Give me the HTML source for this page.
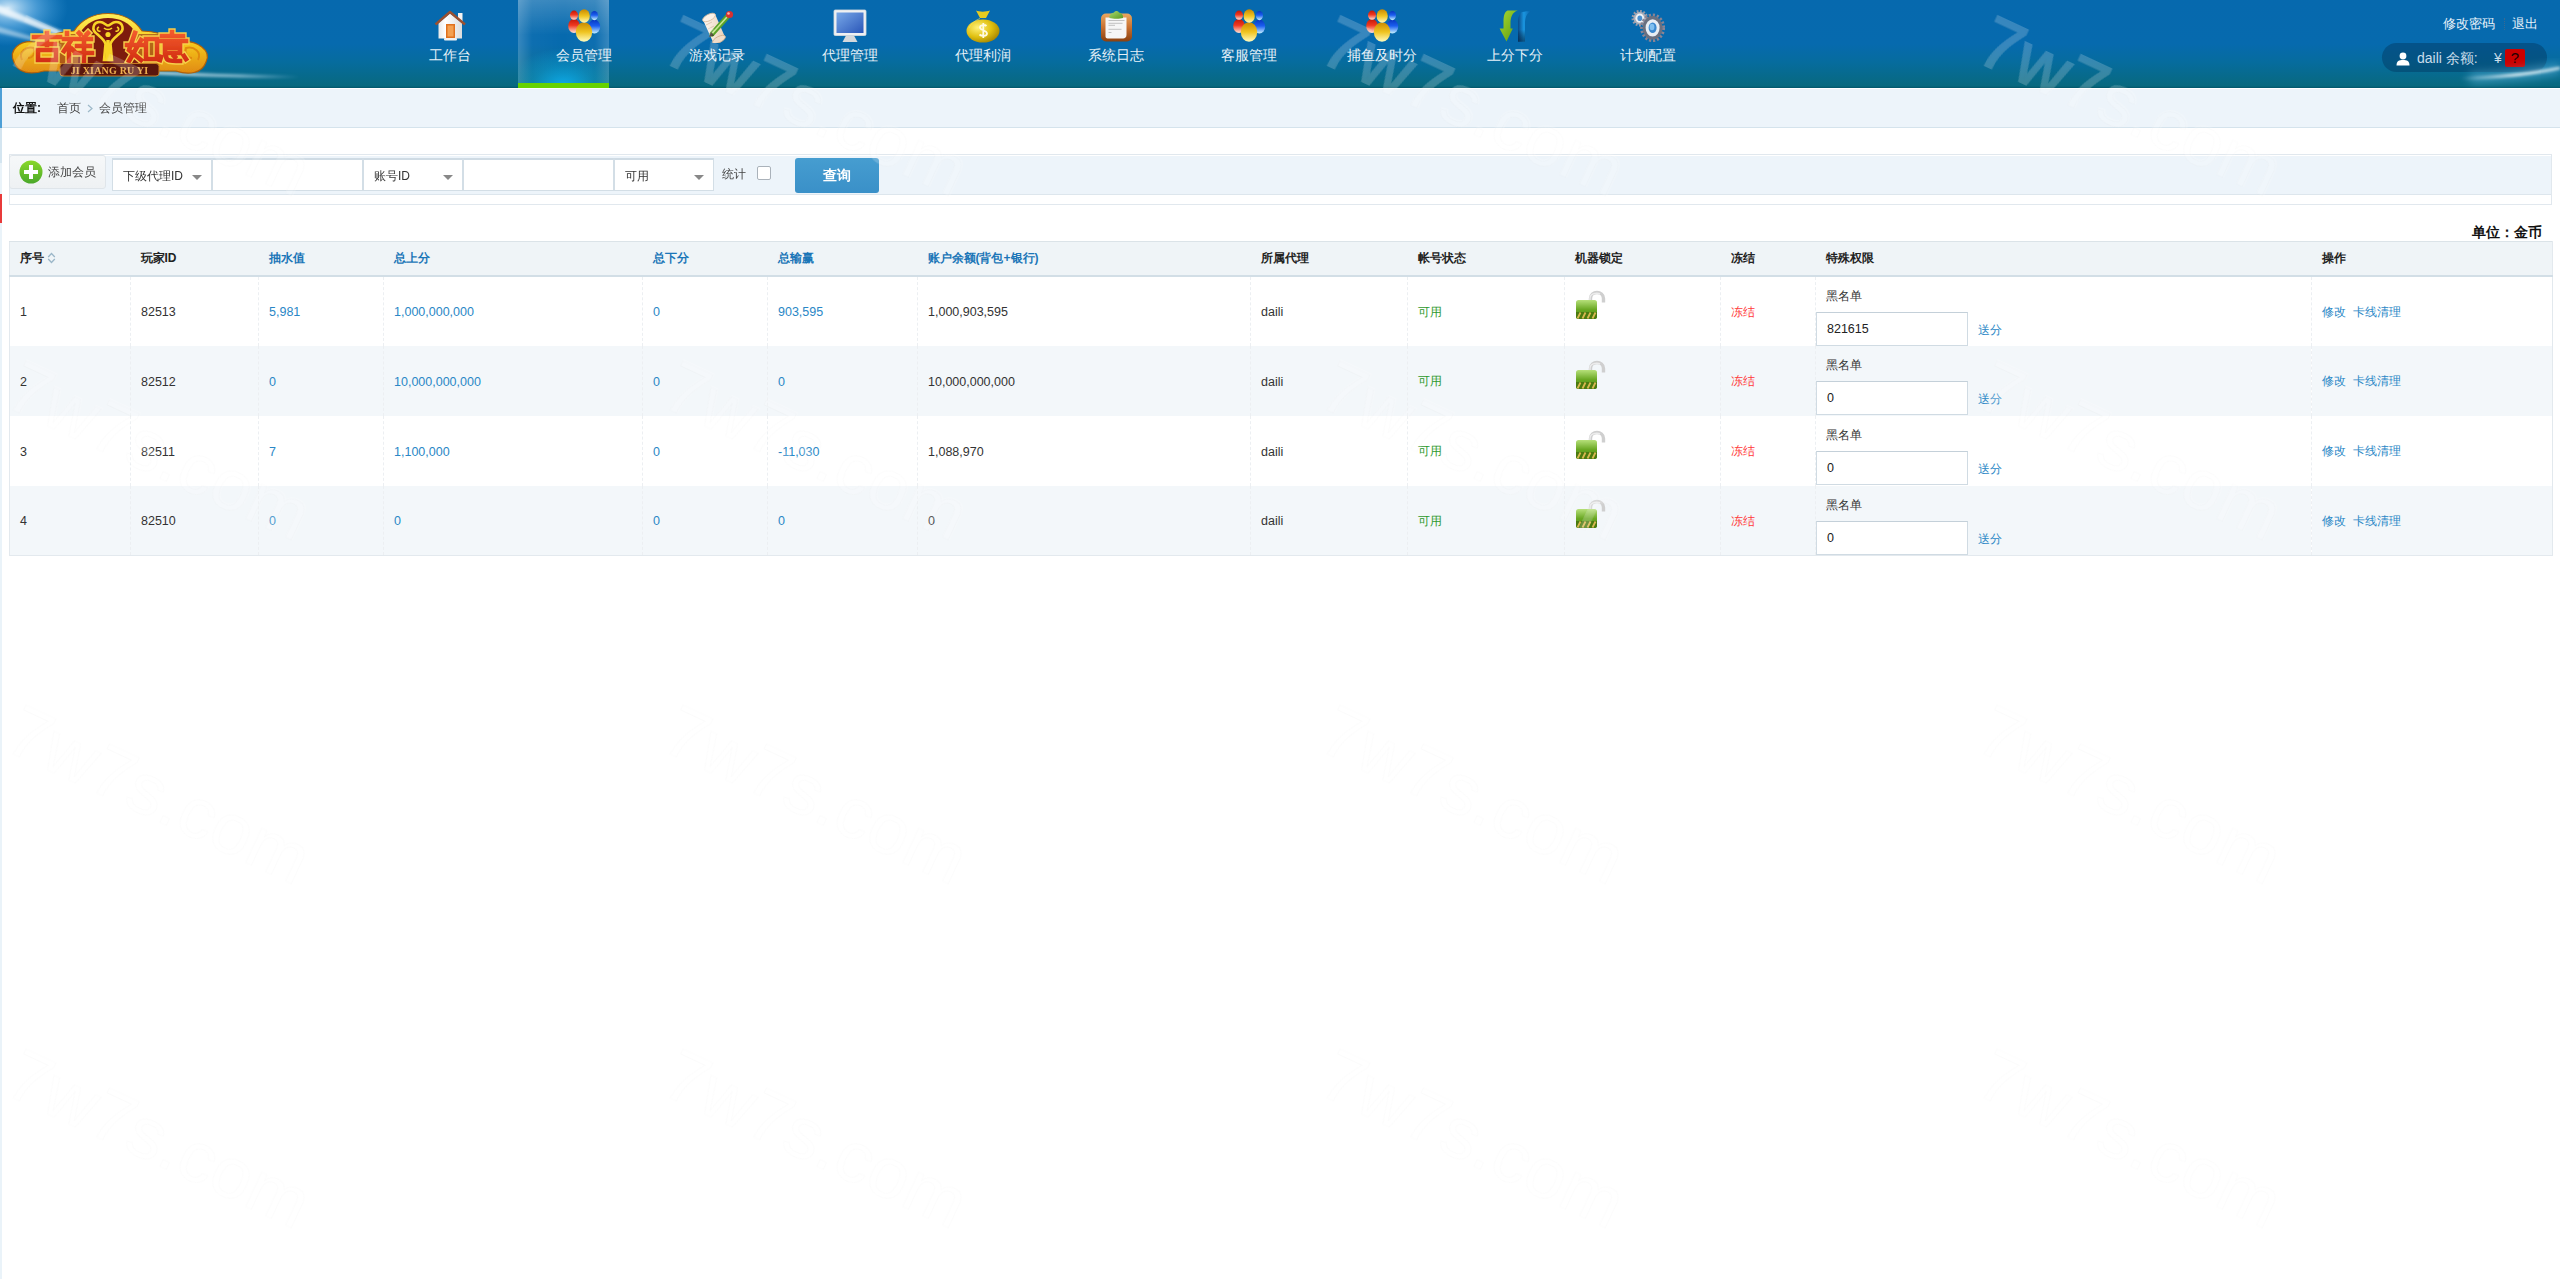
<!DOCTYPE html>
<html><head><meta charset="utf-8"><title>会员管理</title>
<style>
*{margin:0;padding:0;box-sizing:border-box}
html,body{width:2560px;height:1279px;overflow:hidden;background:#fff;font-family:"Liberation Sans",sans-serif;font-size:12px;color:#333}
.a{position:absolute}
#hd{left:0;top:0;width:2560px;height:88px;background:linear-gradient(to bottom,#0669ae 0px,#066aae 44px,#066c9e 62px,#08697f 86px,#03556a 88px);overflow:hidden}
.nav{top:0;width:133px;height:88px;text-align:center;color:#e6f1f8;font-size:14px}
.nav .t{position:absolute;left:0;right:0;top:47px;line-height:16px;white-space:nowrap}
.nav svg{position:absolute;left:50%;top:9px;margin-left:-17px}
#bc{left:0;top:88px;width:2560px;height:40px;border-top:1px solid #fff;background:#edf4fa;border-bottom:1px solid #d5e3ec}
#ls{left:0;top:88px;width:2px;height:1191px;background:#eaf3f9}
#tb{left:9px;top:154px;width:2543px;height:51px;border:1px solid #e1e8ee;background:#fff}
#tbi{left:0;top:0;width:2541px;height:40px;border-top:1px solid #fff;background:#edf4fa;border-bottom:1px solid #dde6ed}
.sel{top:2px;height:33px;background:#fff;border:1px solid #d3dee6;border-top:2px solid #cfdbe4}
.sel .t{position:absolute;left:10px;top:9px;line-height:14px;font-size:12px;color:#333}
.sel .ar{position:absolute;right:9px;top:15px;width:0;height:0;border-left:5px solid transparent;border-right:5px solid transparent;border-top:5px solid #888}
table{border-collapse:collapse;table-layout:fixed}
#tbl{position:absolute;left:9px;top:241px;width:2543px;border:1px solid #e3e9ee;border-top:1px solid #dbe3e8}
#tbl th{height:34px;background:#eff4f7;border-bottom:2px solid #d2dee6;text-align:left;padding-left:10px;font-weight:bold;font-size:12px;color:#222}
#tbl th.b{color:#1b76b8}
#tbl td{height:70px;padding-left:10px;padding-top:2px;font-size:12.5px;color:#333;border-left:1px dashed #eceff2;vertical-align:middle;white-space:nowrap}
#tbl td:first-child{border-left:none}
#tbl tr.e td{background:#f3f7fa}
#tbl td.bl,.bl{color:#2a87c6}
#tbl td.gr{color:#2e9a2e;font-size:12px}
#tbl td.rd{color:#ff3b3b;font-size:12px}
#tbl td.sp{position:relative;padding-left:0}
.bk{position:absolute;left:10px;top:12px;line-height:14px;color:#333;font-size:12px}
.inp{position:absolute;left:0;top:35px;width:152px;height:34px;border:1px solid #d0dbe3;border-top-color:#c4d0d9;background:#fff;padding-left:10px;line-height:32px;color:#222}
.sf{position:absolute;left:162px;top:46px;line-height:14px;color:#2a87c6;font-size:12px}
</style></head>
<body>
<div id="hd" class="a">
<svg class="a" style="left:0;top:0" width="320" height="88" viewBox="0 0 320 88">
<defs>
<linearGradient id="gold" x1="0" y1="0" x2="0" y2="1"><stop offset="0" stop-color="#fff05a"/><stop offset="0.5" stop-color="#f6c81e"/><stop offset="1" stop-color="#e08a10"/></linearGradient>
<linearGradient id="streak" x1="150" y1="0" x2="300" y2="0" gradientUnits="userSpaceOnUse"><stop offset="0" stop-color="#fff" stop-opacity="0.9"/><stop offset="0.6" stop-color="#e0f4ff" stop-opacity="0.7"/><stop offset="1" stop-color="#bfe6ff" stop-opacity="0"/></linearGradient>
<linearGradient id="redg" x1="0" y1="0" x2="0" y2="1"><stop offset="0" stop-color="#f25a2c"/><stop offset="1" stop-color="#d22e12"/></linearGradient>
<radialGradient id="glow" cx="0.5" cy="0.5" r="0.5"><stop offset="0" stop-color="#e8f6ff" stop-opacity="0.9"/><stop offset="0.5" stop-color="#8fd0ff" stop-opacity="0.45"/><stop offset="1" stop-color="#5bb6ef" stop-opacity="0"/></radialGradient>
<filter id="bl2" x="-20%" y="-50%" width="140%" height="200%"><feGaussianBlur stdDeviation="1.6"/></filter>
<filter id="bl1"><feGaussianBlur stdDeviation="0.5"/></filter>
</defs>
<ellipse cx="8" cy="8" rx="60" ry="38" fill="url(#glow)"/>
<g filter="url(#bl2)">
<path d="M-4 4 L64 32 L60 36 L-4 12Z" fill="#fff" opacity="0.75"/>
<path d="M-4 26 L44 40 L42 43 L-4 32Z" fill="#fff" opacity="0.45"/>
<path d="M150 71 C 190 73, 240 75, 300 76 L 300 78 C 240 78, 190 76, 150 74Z" fill="url(#streak)" opacity="0.9"/>
</g>
<g filter="url(#bl1)">
<path d="M14 62 C 8 50, 20 40, 34 42 C 46 36, 62 31, 74 31 C 82 19, 95 13.5, 108 13.5 C 121 13.5, 134 19, 142 31 C 154 31, 170 36, 182 42 C 196 40, 212 50, 206 62 C 202 74, 188 75, 176 71 L 44 71 C 30 75, 18 73, 14 62 Z" fill="url(#gold)" stroke="#b06008" stroke-width="1.2"/>
<path d="M22 60 C 18 52, 26 46, 34 48 C 36 54, 32 58, 28 58 M 198 60 C 202 52, 194 46, 186 48 C 184 54, 188 58, 192 58" fill="none" stroke="#e08a10" stroke-width="2"/>
<path d="M80 33 C 86 23, 96 18, 108 18 C 120 18, 130 23, 136 33 L 138 63 L 78 63 Z" fill="#7e1a10"/>
<path d="M56 34 H 80 V 63 H 56Z M 136 34 H 160 V 63 H 136Z" fill="#8a2a14" opacity="0.6"/>
<path d="M100 22 C 93 22, 91 30, 97 34 C 101 37.5, 104.5 39.5, 105.5 44 L 104 60 L 112 60 L 110.5 44 C 111.5 39.5, 115 37.5, 119 34 C 125 30, 123 22, 116 22 C 112 22, 110 25.5, 108 25.5 C 106 25.5, 104 22, 100 22Z" fill="#7a1810" stroke="#f8d428" stroke-width="2.6"/>
<path d="M99 27 C 96 28.5, 97.5 32, 100.5 31 M 117 27 C 120 28.5, 118.5 32, 115.5 31 M 104 28 C 106 30, 110 30, 112 28" fill="none" stroke="#f8d428" stroke-width="1.6"/>
<circle cx="108" cy="34.5" r="2.6" fill="#f8d428"/>
<path d="M106.3 40 L 105 59 L 111 59 L 109.7 40Z" fill="#f8d428"/>
<g fill="none" stroke-linecap="square" stroke-linejoin="miter">
<g stroke="#f6d04a" stroke-width="7.4">
<path id="ch" d="M34 37 H60 M47 33 V45 M39 44 H55 M38 50 H56 V60 H38Z M67 33 V34 M64 39 H72 L64 51 M69 45 V61 M72 49 L74 51 M79 33 L80 34 M88 33 L87 34 M76 39 H91 M77 46 H90 M75 53 H92 M84 37 V61 M135 33 L129 50 L141 60 M141 40 L129 61 M127 45 H142 M146 39 H157 V59 H146Z M172 32 V34 M162 36 H183 M159 41 H186 M165 44 H180 V53 H165Z M165 48 H180 M161 57 L160 60 M166 56 C 166 61, 170 61, 180 61 M174 56 L175 57 M184 56 L186 59"/>
</g>
<g stroke="url(#redg)" stroke-width="4.6"><use href="#ch"/></g>
</g>
<rect x="60" y="63.5" width="99" height="12.5" rx="3" fill="#5a180c" stroke="#c47a24" stroke-width="1"/>
<text x="109.5" y="73.5" text-anchor="middle" font-family="Liberation Serif" font-weight="bold" font-size="10" fill="#f0b050" letter-spacing="0.2">JI XIANG RU YI</text>
</g>
</svg>
<div class="a" style="left:518px;top:0;width:91px;height:88px;background:radial-gradient(ellipse 55px 38px at 50% 86px,rgba(14,175,240,0.95),rgba(14,175,240,0.35) 55%,rgba(14,175,240,0) 100%),linear-gradient(to right,rgba(255,255,255,0.2),rgba(255,255,255,0.03) 14px,rgba(255,255,255,0) 50%,rgba(255,255,255,0.03) 77px,rgba(255,255,255,0.2)),linear-gradient(to bottom,rgba(255,255,255,0.2),rgba(255,255,255,0) 35px)"></div><div class="a" style="left:518px;top:83px;width:91px;height:5px;background:#66d200"></div>
<div class="a nav" style="left:383.5px"><svg width="34" height="34" viewBox="0 0 34 34"><defs><linearGradient id="hw" x1="0" y1="0" x2="1" y2="0"><stop offset="0" stop-color="#e8e8e8"/><stop offset="0.3" stop-color="#fff"/><stop offset="1" stop-color="#dcdcdc"/></linearGradient></defs><path d="M25 4 H29.5 V14 L25 10Z" fill="#f2f2f2"/><path d="M5.5 14 L17 4.5 L29 14 V29.5 H5.5Z" fill="url(#hw)"/><path d="M2.5 15.5 L17 3 L32 15.5" fill="none" stroke="#9a5030" stroke-width="2.4" stroke-linejoin="round"/><rect x="13" y="15" width="9" height="14" fill="#e0701c"/><rect x="14.5" y="16.5" width="6" height="11" fill="#f4a050"/><rect x="11" y="29" width="13" height="2.5" rx="1" fill="#f0f0f0"/></svg><div class="t">工作台</div></div>
<div class="a nav" style="left:517.5px"><svg width="34" height="34" viewBox="0 0 34 34"><defs>
<linearGradient id="pr" x1="0" y1="0" x2="0" y2="1"><stop offset="0" stop-color="#c01808"/><stop offset="0.45" stop-color="#f03820"/><stop offset="1" stop-color="#ffe4d8"/></linearGradient><linearGradient id="pb" x1="0" y1="0" x2="0" y2="1"><stop offset="0" stop-color="#0838c0"/><stop offset="0.45" stop-color="#1a5ef0"/><stop offset="1" stop-color="#c8f4ff"/></linearGradient><linearGradient id="py" x1="0" y1="0" x2="0" y2="1"><stop offset="0" stop-color="#c88800"/><stop offset="0.5" stop-color="#f0c420"/><stop offset="1" stop-color="#fffcc0"/></linearGradient></defs>
<ellipse cx="7" cy="17" rx="5.8" ry="7" fill="url(#pr)"/><ellipse cx="7" cy="6.2" rx="4" ry="4.6" fill="url(#pr)"/><ellipse cx="27.4" cy="17.6" rx="5.8" ry="7" fill="url(#pb)"/><ellipse cx="27.4" cy="6.6" rx="3.6" ry="4.6" fill="url(#pb)"/><ellipse cx="17" cy="23" rx="8.2" ry="9.8" fill="url(#py)"/><ellipse cx="17.2" cy="7" rx="5.6" ry="6.8" fill="url(#py)"/>


</svg><div class="t">会员管理</div></div>
<div class="a nav" style="left:650px"><svg width="34" height="34" viewBox="0 0 34 34"><defs><linearGradient id="pap" x1="0" y1="0" x2="1" y2="0"><stop offset="0" stop-color="#fff8f0"/><stop offset="1" stop-color="#e8d0b8"/></linearGradient><linearGradient id="pen" x1="0" y1="0" x2="1" y2="1"><stop offset="0" stop-color="#d8f0a0"/><stop offset="1" stop-color="#4a9a20"/></linearGradient></defs><path d="M3 11 L15 5 L25 28 L13 33Z" fill="url(#pap)"/><ellipse cx="9" cy="8.5" rx="7" ry="3.2" transform="rotate(-27 9 8.5)" fill="#fbf2e8" stroke="#d8bca0" stroke-width="0.8"/><ellipse cx="19" cy="30.5" rx="7" ry="3" transform="rotate(-27 19 30.5)" fill="#f0dcc8" stroke="#d0b090" stroke-width="0.8"/><path d="M6 16 L12 13 M8 20 L14 17" stroke="#d8c0a8" stroke-width="0.8"/><path d="M12 25 L28 7" stroke="#5aa228" stroke-width="5" stroke-linecap="round"/><path d="M12.5 24 L27 8" stroke="#c8e890" stroke-width="1.6"/><path d="M11 23 L14 26.5 L9 28Z" fill="#3a3020"/><circle cx="29.5" cy="5.5" r="3.6" fill="#d83030"/><circle cx="28.5" cy="4.5" r="1.3" fill="#ffb0a0"/></svg><div class="t">游戏记录</div></div>
<div class="a nav" style="left:783.5px"><svg width="34" height="34" viewBox="0 0 34 34"><defs><linearGradient id="scr" x1="0" y1="0" x2="1" y2="1"><stop offset="0" stop-color="#78a8e8"/><stop offset="1" stop-color="#2a56b8"/></linearGradient></defs><rect x="1" y="1" width="32" height="25.5" rx="1.2" fill="#eef0f2"/><rect x="1" y="1" width="32" height="25.5" rx="1.2" fill="none" stroke="#d8dce0" stroke-width="0.8"/><rect x="3.5" y="3.5" width="27" height="20.5" fill="url(#scr)"/><path d="M13 26.5 H21 L24.5 33 H9.5Z" fill="#d4d8dc"/></svg><div class="t">代理管理</div></div>
<div class="a nav" style="left:916.5px"><svg width="34" height="34" viewBox="0 0 34 34"><defs><radialGradient id="bag" cx="0.35" cy="0.35" r="0.75"><stop offset="0" stop-color="#fff27a"/><stop offset="0.55" stop-color="#e0c010"/><stop offset="1" stop-color="#a08000"/></radialGradient></defs><path d="M10 1.5 C 13 3, 20 3, 24 1.5 L 20 9 H 14Z" fill="#e6cc20"/><ellipse cx="17" cy="22" rx="16.5" ry="11.5" fill="url(#bag)"/><path d="M14 9.5 C 10 11, 5 14, 3 19" fill="none" stroke="#f8e860" stroke-width="1" opacity="0.6"/><path d="M20.5 17 C 19 15.5, 14 15.5, 14 18.5 C 14 21.5, 21 21, 21 24.5 C 21 27.5, 15.5 27.5, 13.5 25.5 M17.3 14 V29" fill="none" stroke="#fffbe0" stroke-width="1.8"/></svg><div class="t">代理利润</div></div>
<div class="a nav" style="left:1049px"><svg width="34" height="34" viewBox="0 0 34 34"><defs><linearGradient id="brd" x1="0" y1="0" x2="0" y2="1"><stop offset="0" stop-color="#eaa860"/><stop offset="0.5" stop-color="#c87030"/><stop offset="1" stop-color="#8a4010"/></linearGradient><linearGradient id="clp" x1="0" y1="0" x2="1" y2="1"><stop offset="0" stop-color="#a8d870"/><stop offset="1" stop-color="#5a9a20"/></linearGradient></defs><rect x="2" y="4.5" width="31" height="28" rx="5" fill="url(#brd)"/><path d="M6.5 8.5 H27.5 V26 C27.5 28, 26 29.5, 24 29.5 H8.5 C7.5 29.5, 6.5 28.5, 6.5 27.5Z" fill="#f6f6f6"/><path d="M9.5 11.5 H25.5 M9.5 14.3 H23.5 M9.5 16.3 H16 M9.5 20.3 H22.5 M9.5 23.5 H12.5" stroke="#bbb" stroke-width="0.9"/><path d="M10.5 9 C 10 5, 13 4, 15 3.5 C 16 1.5, 19 1.5, 20 3.5 C 22 4, 24.5 5, 24 9 C 21 10, 14 10, 10.5 9Z" fill="url(#clp)"/></svg><div class="t">系统日志</div></div>
<div class="a nav" style="left:1182.5px"><svg width="34" height="34" viewBox="0 0 34 34"><defs>
<linearGradient id="pr" x1="0" y1="0" x2="0" y2="1"><stop offset="0" stop-color="#c01808"/><stop offset="0.45" stop-color="#f03820"/><stop offset="1" stop-color="#ffe4d8"/></linearGradient><linearGradient id="pb" x1="0" y1="0" x2="0" y2="1"><stop offset="0" stop-color="#0838c0"/><stop offset="0.45" stop-color="#1a5ef0"/><stop offset="1" stop-color="#c8f4ff"/></linearGradient><linearGradient id="py" x1="0" y1="0" x2="0" y2="1"><stop offset="0" stop-color="#c88800"/><stop offset="0.5" stop-color="#f0c420"/><stop offset="1" stop-color="#fffcc0"/></linearGradient></defs>
<ellipse cx="7" cy="17" rx="5.8" ry="7" fill="url(#pr)"/><ellipse cx="7" cy="6.2" rx="4" ry="4.6" fill="url(#pr)"/><ellipse cx="27.4" cy="17.6" rx="5.8" ry="7" fill="url(#pb)"/><ellipse cx="27.4" cy="6.6" rx="3.6" ry="4.6" fill="url(#pb)"/><ellipse cx="17" cy="23" rx="8.2" ry="9.8" fill="url(#py)"/><ellipse cx="17.2" cy="7" rx="5.6" ry="6.8" fill="url(#py)"/>


</svg><div class="t">客服管理</div></div>
<div class="a nav" style="left:1315.5px"><svg width="34" height="34" viewBox="0 0 34 34"><defs>
<linearGradient id="pr" x1="0" y1="0" x2="0" y2="1"><stop offset="0" stop-color="#c01808"/><stop offset="0.45" stop-color="#f03820"/><stop offset="1" stop-color="#ffe4d8"/></linearGradient><linearGradient id="pb" x1="0" y1="0" x2="0" y2="1"><stop offset="0" stop-color="#0838c0"/><stop offset="0.45" stop-color="#1a5ef0"/><stop offset="1" stop-color="#c8f4ff"/></linearGradient><linearGradient id="py" x1="0" y1="0" x2="0" y2="1"><stop offset="0" stop-color="#c88800"/><stop offset="0.5" stop-color="#f0c420"/><stop offset="1" stop-color="#fffcc0"/></linearGradient></defs>
<ellipse cx="7" cy="17" rx="5.8" ry="7" fill="url(#pr)"/><ellipse cx="7" cy="6.2" rx="4" ry="4.6" fill="url(#pr)"/><ellipse cx="27.4" cy="17.6" rx="5.8" ry="7" fill="url(#pb)"/><ellipse cx="27.4" cy="6.6" rx="3.6" ry="4.6" fill="url(#pb)"/><ellipse cx="17" cy="23" rx="8.2" ry="9.8" fill="url(#py)"/><ellipse cx="17.2" cy="7" rx="5.6" ry="6.8" fill="url(#py)"/>


</svg><div class="t">捕鱼及时分</div></div>
<div class="a nav" style="left:1448.5px"><svg width="34" height="34" viewBox="0 0 34 34"><defs><linearGradient id="ga" x1="0" y1="0" x2="1" y2="1"><stop offset="0" stop-color="#a8d830"/><stop offset="1" stop-color="#5a9a10"/></linearGradient><linearGradient id="ba" x1="0" y1="0" x2="1" y2="0"><stop offset="0" stop-color="#0a4a88"/><stop offset="0.45" stop-color="#1a96e0"/><stop offset="1" stop-color="#0a60a8"/></linearGradient><linearGradient id="bb" x1="0" y1="0" x2="0" y2="1"><stop offset="0.6" stop-color="#000" stop-opacity="0"/><stop offset="1" stop-color="#002040" stop-opacity="0.6"/></linearGradient></defs><path d="M9.5 1.5 H19.8 C 14 3, 12.5 9, 12.5 14 V19.5 H14.8 L8.5 32.5 L1.6 19.5 H5.5 V13 C 5.5 7, 6.5 3, 9.5 1.5Z" fill="url(#ga)"/><path d="M24 3 C 28 2.2, 31 2.3, 33 2.5 C 28.5 4, 27 9, 27 15 V32.7 H20 V15 C 20 9, 21 5, 24 3Z" fill="url(#ba)"/><path d="M24 3 C 28 2.2, 31 2.3, 33 2.5 C 28.5 4, 27 9, 27 15 V32.7 H20 V15 C 20 9, 21 5, 24 3Z" fill="url(#bb)"/></svg><div class="t">上分下分</div></div>
<div class="a nav" style="left:1581.5px"><svg width="34" height="34" viewBox="0 0 34 34"><g transform="translate(8.8 9.2)"><circle r="7" fill="none" stroke="#9a9aa8" stroke-width="2.6" stroke-dasharray="1.8 1.5"/><circle r="6.4" fill="#a8acb8"/><ellipse rx="4.4" ry="4.6" fill="#eef2f6"/><ellipse rx="2.4" ry="2.8" fill="#4a90d0"/></g><g transform="translate(21.6 18.8)"><ellipse rx="11" ry="12.8" fill="none" stroke="#8a8494" stroke-width="3" stroke-dasharray="2.2 1.8"/><ellipse rx="10" ry="11.8" fill="#6a7080"/><ellipse rx="7" ry="8.6" fill="#e8eef4"/><ellipse rx="4" ry="5.2" fill="#3a88d0"/><ellipse cx="-0.6" cy="-0.8" rx="2.4" ry="3.2" fill="#80c0f0"/></g></svg><div class="t">计划配置</div></div>
<div class="a" style="left:2443px;top:16px;font-size:13px;line-height:16px;color:#e8f2fa;white-space:nowrap">修改密码</div>
<div class="a" style="left:2504px;top:18px;width:1px;height:12px;border-left:1px dotted #3a6a90"></div>
<div class="a" style="left:2512px;top:16px;font-size:13px;line-height:16px;color:#e8f2fa;white-space:nowrap">退出</div>
<div class="a" style="left:2382px;top:43px;width:165px;height:29px;border-radius:15px;background:rgba(2,55,95,0.45)"></div>
<svg class="a" style="left:2396px;top:52px" width="14" height="14" viewBox="0 0 14 14"><circle cx="7" cy="4" r="3.4" fill="#fff"/><path d="M0.5 13.5 C0.5 9, 3 8, 7 8 C 11 8, 13.5 9, 13.5 13.5Z" fill="#fff"/></svg>
<div class="a" style="left:2417px;top:50px;font-size:14px;line-height:16px;color:#c9dcea;white-space:nowrap">daili 余额:</div><div class="a" style="left:2494px;top:50px;font-size:14px;line-height:16px;color:#c9dcea">¥</div>
<div class="a" style="left:2505px;top:49px;width:20px;height:18px;border-radius:2px;background:#cc0000;color:#200;font-size:15px;line-height:18px;text-align:center">?</div>
<svg class="a" style="left:2400px;top:40px" width="160" height="48" viewBox="0 0 160 48"><defs><filter id="sb" x="-10%" y="-100%" width="120%" height="300%"><feGaussianBlur stdDeviation="1.8"/></filter><filter id="sb2" x="-20%" y="-100%" width="140%" height="300%"><feGaussianBlur stdDeviation="5"/></filter><linearGradient id="sg" x1="0" y1="0" x2="1" y2="0"><stop offset="0" stop-color="#fff" stop-opacity="0"/><stop offset="0.55" stop-color="#fff" stop-opacity="0.9"/><stop offset="1" stop-color="#fff" stop-opacity="0.8"/></linearGradient></defs><path d="M70 38 Q 125 36 160 28" fill="none" stroke="#7fd0f8" stroke-width="10" opacity="0.45" filter="url(#sb2)"/><path d="M60 38.5 Q 120 36.5 160 28" fill="none" stroke="url(#sg)" stroke-width="2.6" filter="url(#sb)"/></svg>
</div>
<div id="ls" class="a"></div>
<div id="bc" class="a">
<div class="a" style="left:0;top:-1px;width:2px;height:40px;background:#4d9fd6"></div>
<div class="a" style="left:13px;top:12px;line-height:14px;font-weight:bold;color:#111;white-space:nowrap">位置:</div>
<div class="a" style="left:57px;top:12px;line-height:14px;color:#444;white-space:nowrap">首页</div>
<svg class="a" style="left:86px;top:15px" width="8" height="9" viewBox="0 0 8 9"><path d="M2 1 L6 4.5 L2 8" fill="none" stroke="#9cb8c8" stroke-width="1.2"/></svg>
<div class="a" style="left:99px;top:12px;line-height:14px;color:#444;white-space:nowrap">会员管理</div>
</div>
<div class="a" style="left:0;top:128px;width:2px;height:35px;background:#d4e5f0"></div>
<div class="a" style="left:0;top:194px;width:2px;height:29px;background:#e83a3a"></div>
<div id="tb" class="a"><div id="tbi" class="a">
<div class="a" style="left:-1px;top:-1px;width:97px;height:34px;border:1px solid #dfe5ea;border-radius:3px;background:linear-gradient(#f6f8f9,#eef1f3)">
<svg class="a" style="left:9px;top:3.5px" width="24" height="24" viewBox="0 0 24 24"><defs><linearGradient id="gc" x1="0" y1="0" x2="0" y2="1"><stop offset="0" stop-color="#8ad82a"/><stop offset="1" stop-color="#4aa82a"/></linearGradient></defs><circle cx="12" cy="12" r="11.5" fill="url(#gc)"/><path d="M10 5 H14 V10 H19 V14 H14 V19 H10 V14 H5 V10 H10Z" fill="#fff"/></svg>
<div class="a" style="left:38px;top:9px;line-height:14px;color:#444;white-space:nowrap">添加会员</div>
</div>
<div class="a sel" style="left:102px;width:100px"><div class="t">下级代理ID</div><div class="ar"></div></div>
<div class="a sel" style="left:202px;width:151px"></div>
<div class="a sel" style="left:353px;width:100px"><div class="t">账号ID</div><div class="ar"></div></div>
<div class="a sel" style="left:453px;width:151px"></div>
<div class="a sel" style="left:604px;width:100px"><div class="t">可用</div><div class="ar"></div></div>
<div class="a" style="left:712px;top:11px;line-height:14px;color:#444;white-space:nowrap">统计</div>
<div class="a" style="left:747px;top:10px;width:14px;height:14px;border:1px solid #aab2ba;border-radius:2px;background:#fff"></div>
<div class="a" style="left:785px;top:2px;width:84px;height:35px;border-radius:3px;background:linear-gradient(#469dd0,#3a90c8);color:#fff;font-size:14px;line-height:35px;text-align:center;font-weight:bold">查询</div>
</div></div>
<div class="a" style="right:18px;top:224px;font-weight:bold;font-size:14px;line-height:16px;color:#111;white-space:nowrap">单位：金币</div>
<table id="tbl"><colgroup><col style="width:121px"><col style="width:128px"><col style="width:125px"><col style="width:259px"><col style="width:125px"><col style="width:150px"><col style="width:333px"><col style="width:157px"><col style="width:157px"><col style="width:156px"><col style="width:95px"><col style="width:496px"><col style="width:241px"></colgroup>
<tr><th>序号<svg width="9" height="12" viewBox="0 0 9 12" style="vertical-align:-2px;margin-left:3px"><path d="M1.2 5 L4.5 1.5 L7.8 5 M1.2 7 L4.5 10.5 L7.8 7" fill="none" stroke="#9ab6c8" stroke-width="1.3"/></svg></th><th>玩家ID</th><th class="b">抽水值</th><th class="b">总上分</th><th class="b">总下分</th><th class="b">总输赢</th><th class="b">账户余额(背包+银行)</th><th>所属代理</th><th>帐号状态</th><th>机器锁定</th><th>冻结</th><th>特殊权限</th><th>操作</th></tr>
<tr><td>1</td><td>82513</td><td class="bl">5,981</td><td class="bl">1,000,000,000</td><td class="bl">0</td><td class="bl">903,595</td><td>1,000,903,595</td><td>daili</td><td class="gr">可用</td><td><svg width="34" height="30" viewBox="0 0 34 30" style="display:block;margin-top:-14px"><defs><linearGradient id="lk" x1="0" y1="0" x2="0" y2="1"><stop offset="0" stop-color="#b6e07a"/><stop offset="0.5" stop-color="#6aa824"/><stop offset="1" stop-color="#4a8a10"/></linearGradient></defs><path d="M15.5 12 V8.5 C15.5 0.5, 28.5 0.5, 28.5 8.5 V12.5" fill="none" stroke="#cfcfcf" stroke-width="3.4"/><path d="M15 10 V8.5 C15 3, 22 2.5, 25 4" fill="none" stroke="#ececec" stroke-width="1.4"/><rect x="1" y="10" width="21" height="19" rx="2.5" fill="url(#lk)"/><path d="M1 22 H22 V26.5 C22 28, 21 29, 19.5 29 H3.5 C2 29, 1 28, 1 26.5Z" fill="#4a7a10"/><path d="M2.5 28.5 L5.5 22.5 M7.5 28.5 L10.5 22.5 M12.5 28.5 L15.5 22.5 M17.5 28.5 L20.5 22.5" stroke="#d8b850" stroke-width="1.8"/></svg></td><td class="rd">冻结</td><td class="sp"><div class="bk">黑名单</div><div class="inp">821615</div><span class="sf">送分</span></td><td class="bl" style="font-size:12px">修改&nbsp; 卡线清理</td></tr>
<tr class="e"><td>2</td><td>82512</td><td class="bl">0</td><td class="bl">10,000,000,000</td><td class="bl">0</td><td class="bl">0</td><td>10,000,000,000</td><td>daili</td><td class="gr">可用</td><td><svg width="34" height="30" viewBox="0 0 34 30" style="display:block;margin-top:-14px"><defs><linearGradient id="lk" x1="0" y1="0" x2="0" y2="1"><stop offset="0" stop-color="#b6e07a"/><stop offset="0.5" stop-color="#6aa824"/><stop offset="1" stop-color="#4a8a10"/></linearGradient></defs><path d="M15.5 12 V8.5 C15.5 0.5, 28.5 0.5, 28.5 8.5 V12.5" fill="none" stroke="#cfcfcf" stroke-width="3.4"/><path d="M15 10 V8.5 C15 3, 22 2.5, 25 4" fill="none" stroke="#ececec" stroke-width="1.4"/><rect x="1" y="10" width="21" height="19" rx="2.5" fill="url(#lk)"/><path d="M1 22 H22 V26.5 C22 28, 21 29, 19.5 29 H3.5 C2 29, 1 28, 1 26.5Z" fill="#4a7a10"/><path d="M2.5 28.5 L5.5 22.5 M7.5 28.5 L10.5 22.5 M12.5 28.5 L15.5 22.5 M17.5 28.5 L20.5 22.5" stroke="#d8b850" stroke-width="1.8"/></svg></td><td class="rd">冻结</td><td class="sp"><div class="bk">黑名单</div><div class="inp">0</div><span class="sf">送分</span></td><td class="bl" style="font-size:12px">修改&nbsp; 卡线清理</td></tr>
<tr><td>3</td><td>82511</td><td class="bl">7</td><td class="bl">1,100,000</td><td class="bl">0</td><td class="bl">-11,030</td><td>1,088,970</td><td>daili</td><td class="gr">可用</td><td><svg width="34" height="30" viewBox="0 0 34 30" style="display:block;margin-top:-14px"><defs><linearGradient id="lk" x1="0" y1="0" x2="0" y2="1"><stop offset="0" stop-color="#b6e07a"/><stop offset="0.5" stop-color="#6aa824"/><stop offset="1" stop-color="#4a8a10"/></linearGradient></defs><path d="M15.5 12 V8.5 C15.5 0.5, 28.5 0.5, 28.5 8.5 V12.5" fill="none" stroke="#cfcfcf" stroke-width="3.4"/><path d="M15 10 V8.5 C15 3, 22 2.5, 25 4" fill="none" stroke="#ececec" stroke-width="1.4"/><rect x="1" y="10" width="21" height="19" rx="2.5" fill="url(#lk)"/><path d="M1 22 H22 V26.5 C22 28, 21 29, 19.5 29 H3.5 C2 29, 1 28, 1 26.5Z" fill="#4a7a10"/><path d="M2.5 28.5 L5.5 22.5 M7.5 28.5 L10.5 22.5 M12.5 28.5 L15.5 22.5 M17.5 28.5 L20.5 22.5" stroke="#d8b850" stroke-width="1.8"/></svg></td><td class="rd">冻结</td><td class="sp"><div class="bk">黑名单</div><div class="inp">0</div><span class="sf">送分</span></td><td class="bl" style="font-size:12px">修改&nbsp; 卡线清理</td></tr>
<tr class="e"><td>4</td><td>82510</td><td class="bl">0</td><td class="bl">0</td><td class="bl">0</td><td class="bl">0</td><td>0</td><td>daili</td><td class="gr">可用</td><td><svg width="34" height="30" viewBox="0 0 34 30" style="display:block;margin-top:-14px"><defs><linearGradient id="lk" x1="0" y1="0" x2="0" y2="1"><stop offset="0" stop-color="#b6e07a"/><stop offset="0.5" stop-color="#6aa824"/><stop offset="1" stop-color="#4a8a10"/></linearGradient></defs><path d="M15.5 12 V8.5 C15.5 0.5, 28.5 0.5, 28.5 8.5 V12.5" fill="none" stroke="#cfcfcf" stroke-width="3.4"/><path d="M15 10 V8.5 C15 3, 22 2.5, 25 4" fill="none" stroke="#ececec" stroke-width="1.4"/><rect x="1" y="10" width="21" height="19" rx="2.5" fill="url(#lk)"/><path d="M1 22 H22 V26.5 C22 28, 21 29, 19.5 29 H3.5 C2 29, 1 28, 1 26.5Z" fill="#4a7a10"/><path d="M2.5 28.5 L5.5 22.5 M7.5 28.5 L10.5 22.5 M12.5 28.5 L15.5 22.5 M17.5 28.5 L20.5 22.5" stroke="#d8b850" stroke-width="1.8"/></svg></td><td class="rd">冻结</td><td class="sp"><div class="bk">黑名单</div><div class="inp">0</div><span class="sf">送分</span></td><td class="bl" style="font-size:12px">修改&nbsp; 卡线清理</td></tr>
</table>
<svg class="a" style="left:0;top:0;pointer-events:none" width="2560" height="1279"><defs><text id="wmt" font-family="Liberation Sans" font-size="72">7w7s.com</text></defs><g fill="#fff" stroke="#fff" stroke-width="2.2" opacity="0.2"><use href="#wmt" transform="translate(1973.5 60.0) rotate(25)"/><use href="#wmt" transform="translate(1316.5 60.0) rotate(25)"/><use href="#wmt" transform="translate(659.5 60.0) rotate(25)"/><use href="#wmt" transform="translate(2.5 60.0) rotate(25)"/><use href="#wmt" transform="translate(1973.5 404.0) rotate(25)"/><use href="#wmt" transform="translate(1316.5 404.0) rotate(25)"/><use href="#wmt" transform="translate(659.5 404.0) rotate(25)"/><use href="#wmt" transform="translate(2.5 404.0) rotate(25)"/><use href="#wmt" transform="translate(1973.5 748.0) rotate(25)"/><use href="#wmt" transform="translate(1316.5 748.0) rotate(25)"/><use href="#wmt" transform="translate(659.5 748.0) rotate(25)"/><use href="#wmt" transform="translate(2.5 748.0) rotate(25)"/><use href="#wmt" transform="translate(1973.5 1092.0) rotate(25)"/><use href="#wmt" transform="translate(1316.5 1092.0) rotate(25)"/><use href="#wmt" transform="translate(659.5 1092.0) rotate(25)"/><use href="#wmt" transform="translate(2.5 1092.0) rotate(25)"/></g><g fill="none" stroke="#000" stroke-opacity="0.016" stroke-width="1"><use href="#wmt" transform="translate(1972.7 60.8) rotate(25)"/><use href="#wmt" transform="translate(1315.7 60.8) rotate(25)"/><use href="#wmt" transform="translate(658.7 60.8) rotate(25)"/><use href="#wmt" transform="translate(1.7 60.8) rotate(25)"/><use href="#wmt" transform="translate(1972.7 404.8) rotate(25)"/><use href="#wmt" transform="translate(1315.7 404.8) rotate(25)"/><use href="#wmt" transform="translate(658.7 404.8) rotate(25)"/><use href="#wmt" transform="translate(1.7 404.8) rotate(25)"/><use href="#wmt" transform="translate(1972.7 748.8) rotate(25)"/><use href="#wmt" transform="translate(1315.7 748.8) rotate(25)"/><use href="#wmt" transform="translate(658.7 748.8) rotate(25)"/><use href="#wmt" transform="translate(1.7 748.8) rotate(25)"/><use href="#wmt" transform="translate(1972.7 1092.8) rotate(25)"/><use href="#wmt" transform="translate(1315.7 1092.8) rotate(25)"/><use href="#wmt" transform="translate(658.7 1092.8) rotate(25)"/><use href="#wmt" transform="translate(1.7 1092.8) rotate(25)"/></g></svg>
</body></html>
